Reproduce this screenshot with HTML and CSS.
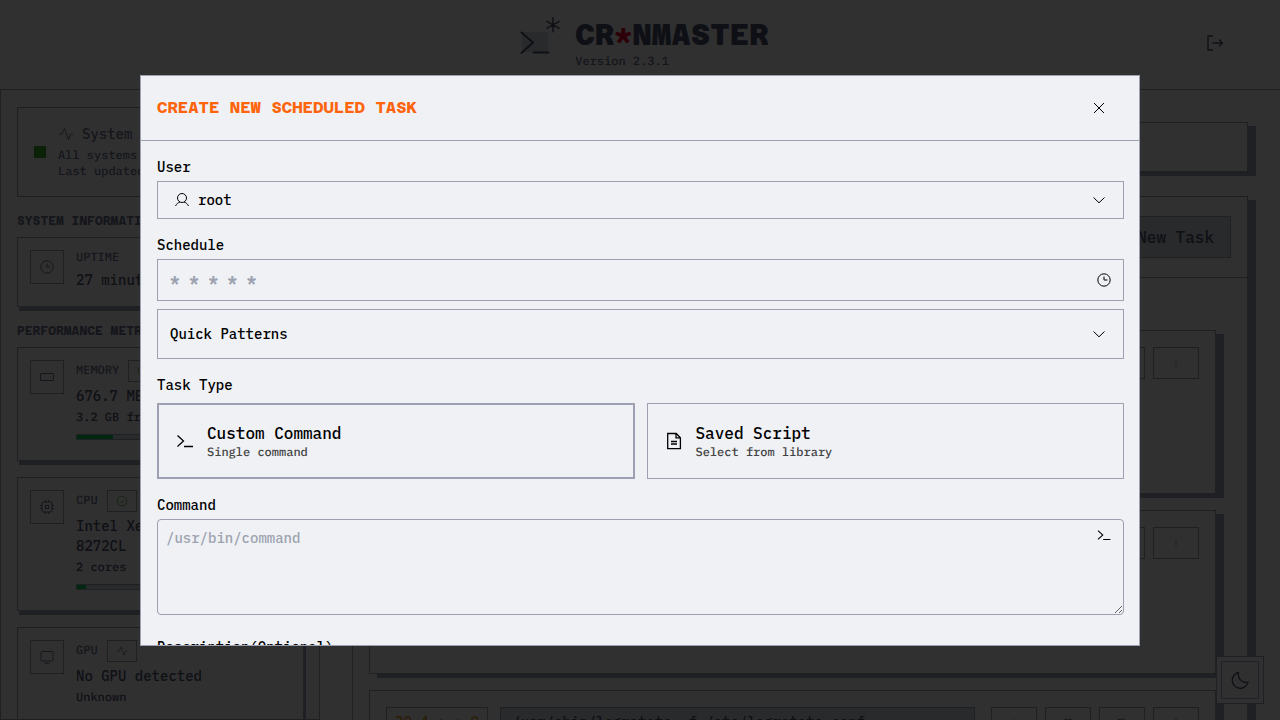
FILE: index.html
```html
<!DOCTYPE html>
<html lang="en">
<head>
<meta charset="utf-8">
<meta name="viewport" content="width=device-width, initial-scale=1">
<title>Cr*nMaster</title>
<link rel="stylesheet" href="styles.css">
</head>
<body>
<svg class="sprite" aria-hidden="true">
  <symbol id="i-activity" viewBox="0 0 16 16"><path d="M1 8h3l2.500-5.500 4 11L13 8h2"/></symbol>
  <symbol id="i-clock" viewBox="0 0 16 16"><circle cx="8" cy="8" r="6.200"/><path d="M8 4.500V8h3.500"/></symbol>
  <symbol id="i-drive" viewBox="0 0 16 16"><rect x="1.500" y="4.500" width="13" height="7" rx=".5"/><path d="M11.500 7.500v1"/></symbol>
  <symbol id="i-cpu" viewBox="0 0 16 16"><rect x="3" y="3" width="10" height="10" rx="1"/><rect x="6.500" y="6.500" width="3" height="3"/><path d="M6.500 1v2M9.500 1v2M6.500 13v2M9.500 13v2M1 6.500h2M1 9.500h2M13 6.500h2M13 9.500h2"/></symbol>
  <symbol id="i-monitor" viewBox="0 0 16 16"><rect x="2" y="2.500" width="12" height="9.500" rx="1"/><path d="M5.500 14.200h5"/></symbol>
  <symbol id="i-check" viewBox="0 0 16 16"><circle cx="8" cy="8" r="6.500"/><path d="M5 8.200l2.200 2.200L11 6.200"/></symbol>
  <symbol id="i-down" viewBox="0 0 16 16"><path d="M2.500 5.500L8 10.800l5.500-5.300"/></symbol>
  <symbol id="i-close" viewBox="0 0 16 16"><path d="M3 3l10 10M13 3L3 13"/></symbol>
  <symbol id="i-user" viewBox="0 0 16 16"><circle cx="8" cy="6" r="4.500"/><path d="M1.500 14c1-2 2.500-3.500 4.500-4M14.500 14c-1-2-2.500-3.500-4.500-4"/></symbol>
  <symbol id="i-terminal" viewBox="0 0 20 20"><path d="M2.500 4.500l6 5.500-6 5.500M9 15.500h9"/></symbol>
  <symbol id="i-file" viewBox="0 0 20 20"><path d="M3.700 2.500h8.500l4.200 4.200v11H3.700zM12 2.700v4.200h4.200M7 10.500h6M7 13h6"/></symbol>
  <symbol id="i-logout" viewBox="0 0 20 20"><path d="M8 3H3v14h5M7.500 10h10M14 6.500l3.500 3.500-3.500 3.500"/></symbol>
  <symbol id="i-moon" viewBox="0 0 20 20"><path d="M8.500 2.500a8 8 0 1 0 9.500 9.800c-6 1-10.500-3.500-9.500-9.800z"/></symbol>
  <symbol id="i-dots" viewBox="0 0 16 16"><path d="M8 3v2M8 7v2M8 11v2" stroke-width="2"/></symbol>
  <symbol id="i-play" viewBox="0 0 16 16"><path d="M8 3v10M3 8h10"/></symbol>
  <symbol id="i-pause" viewBox="0 0 16 16"><path d="M4 3h3v10H4zM9 3h3v10H9z"/></symbol>
  <symbol id="i-save" viewBox="0 0 16 16"><path d="M3 3h8l2 2v8H3zM5 3v3h5"/></symbol>
</svg>

<div class="app">
  <header class="topbar">
    <div class="brand">
      <svg class="logo" viewBox="0 0 52 52" aria-hidden="true">
        <rect class="logo-screen" x="11" y="15" width="26" height="20"/>
        <path d="M10.500 15.500L22 25.500 10.500 36M22.500 35.500h15"/>
        <path class="logo-star" d="M42 .800v14M35.900 4.300l12.200 7M48.100 4.300l-12.200 7"/>
      </svg>
      <div>
        <h1 class="brand-name">CR<span class="brand-star">*</span>NMASTER</h1>
        <p class="version">Version 2.3.1</p>
      </div>
    </div>
    <button class="logout" aria-label="Log out"><svg class="icon icon-20"><use href="#i-logout"/></svg></button>
  </header>

  <div class="columns">
    <aside class="sidebar">
      <section class="status">
        <span class="status-dot"></span>
        <div>
          <h2 class="status-title"><svg class="icon icon-16"><use href="#i-activity"/></svg>System Status</h2>
          <p class="small">All systems running</p>
          <p class="small">Last updated: 10:24</p>
        </div>
      </section>

      <h2 class="group-title">SYSTEM INFORMATION</h2>
      <section class="metric">
        <div class="metric-icon"><svg class="icon icon-16"><use href="#i-clock"/></svg></div>
        <div class="metric-body metric-plain">
          <div class="metric-head">UPTIME</div>
          <p class="value">27 minutes</p>
        </div>
      </section>

      <h2 class="group-title">PERFORMANCE METRICS</h2>
      <div class="metrics">
        <section class="metric">
          <div class="metric-icon"><svg class="icon icon-16"><use href="#i-drive"/></svg></div>
          <div class="metric-body">
            <div class="metric-head">MEMORY<span class="badge good"><svg class="icon icon-12"><use href="#i-check"/></svg></span></div>
            <p class="value">676.7 MB</p>
            <p class="note">3.2 GB free</p>
            <div class="bar"><div class="bar-fill" style="width:17%"></div></div>
          </div>
        </section>
        <section class="metric">
          <div class="metric-icon"><svg class="icon icon-16"><use href="#i-cpu"/></svg></div>
          <div class="metric-body">
            <div class="metric-head">CPU<span class="badge good"><svg class="icon icon-12"><use href="#i-check"/></svg></span></div>
            <p class="value">Intel Xeon Platinum 8272CL</p>
            <p class="note">2 cores</p>
            <div class="bar"><div class="bar-fill" style="width:4%"></div></div>
          </div>
        </section>
        <section class="metric">
          <div class="metric-icon"><svg class="icon icon-16"><use href="#i-monitor"/></svg></div>
          <div class="metric-body">
            <div class="metric-head">GPU<span class="badge"><svg class="icon icon-12"><use href="#i-activity"/></svg></span></div>
            <p class="value">No GPU detected</p>
            <p class="note">Unknown</p>
          </div>
        </section>
      </div>
    </aside>

    <main class="main">
      <section class="panel notice"></section>
      <section class="panel tasks">
        <div class="tasks-head"><button class="new-task">New Task</button></div>
        <div class="jobs">
          <article class="job">
            <div class="job-actions">
              <button class="job-button" aria-label="Pause"></button>
              <button class="job-button faint" aria-label="More"><svg class="icon icon-12"><use href="#i-dots"/></svg></button>
            </div>
          </article>
          <article class="job">
            <div class="job-actions">
              <button class="job-button" aria-label="Pause"></button>
              <button class="job-button faint" aria-label="More"><svg class="icon icon-12"><use href="#i-dots"/></svg></button>
            </div>
          </article>
          <article class="job">
            <code class="cron">30 4 * * 0</code>
            <code class="command">/usr/sbin/logrotate -f /etc/logrotate.conf</code>
            <div class="job-actions">
              <button class="job-button" aria-label="Run"><svg class="icon icon-12"><use href="#i-play"/></svg></button>
              <button class="job-button" aria-label="Pause"><svg class="icon icon-12"><use href="#i-pause"/></svg></button>
              <button class="job-button" aria-label="Log"><svg class="icon icon-12"><use href="#i-save"/></svg></button>
              <button class="job-button" aria-label="More"><svg class="icon icon-12"><use href="#i-dots"/></svg></button>
            </div>
          </article>
        </div>
      </section>
    </main>
  </div>

  <div class="theme"><button class="theme-button" aria-label="Dark theme"><svg class="icon icon-20"><use href="#i-moon"/></svg></button></div>
</div>

<div class="overlay">
  <div class="modal" role="dialog" aria-modal="true" aria-labelledby="dialog-title">
    <div class="modal-head">
      <h2 class="modal-title" id="dialog-title">CREATE NEW SCHEDULED TASK</h2>
      <button class="close" aria-label="Close"><svg class="icon icon-16"><use href="#i-close"/></svg></button>
    </div>
    <form class="modal-body">
      <div class="field">
        <label for="user">User</label>
        <div class="control">
          <svg class="icon icon-16 lead"><use href="#i-user"/></svg>
          <select id="user" class="input user"><option>root</option></select>
          <svg class="icon icon-16 trail"><use href="#i-down"/></svg>
        </div>
      </div>
      <div class="field">
        <label for="schedule">Schedule</label>
        <div class="control">
          <input id="schedule" class="input schedule" type="text" placeholder="* * * * *">
          <svg class="icon icon-16 trail trail-near"><use href="#i-clock"/></svg>
        </div>
        <button type="button" class="patterns">Quick Patterns<svg class="icon icon-16"><use href="#i-down"/></svg></button>
      </div>
      <div class="field">
        <span class="label" id="type-label">Task Type</span>
        <div class="types" role="group" aria-labelledby="type-label">
          <button type="button" class="type selected" aria-pressed="true">
            <svg class="icon icon-20"><use href="#i-terminal"/></svg>
            <span><span class="type-name">Custom Command</span><span class="type-note">Single command</span></span>
          </button>
          <button type="button" class="type" aria-pressed="false">
            <svg class="icon icon-20"><use href="#i-file"/></svg>
            <span><span class="type-name">Saved Script</span><span class="type-note">Select from library</span></span>
          </button>
        </div>
      </div>
      <div class="field">
        <label for="command">Command</label>
        <div class="control">
          <textarea id="command" class="input command-text" placeholder="/usr/bin/command"></textarea>
          <svg class="icon icon-16 corner"><use href="#i-terminal"/></svg>
        </div>
      </div>
      <div class="field description">
        <label for="description">Description(Optional)</label>
        <input id="description" class="input schedule" type="text">
      </div>
    </form>
  </div>
</div>
</body>
</html>
```
FILE: styles.css
```css
:root {
  --bg: #eff1f5;
  --line: #9ca0b0;
  --surface: #ccd0da;
  --text: #4c4f69;
  --muted: #6c6f85;
  --body: "IBM Plex Mono", "DejaVu Sans Mono", monospace;
  --display: "Azeret Mono", "IBM Plex Mono", "DejaVu Sans Mono", monospace;
}

* { box-sizing: border-box; }

body {
  margin: 0;
  background: var(--bg);
  color: var(--text);
  font: 500 14px/20px var(--body);
}

h1, h2, p { margin: 0; }

button, input, select, textarea {
  font: inherit;
  color: inherit;
  background: none;
  border: 0;
  border-radius: 0;
  padding: 0;
  margin: 0;
}

.sprite { position: absolute; width: 0; height: 0; }
.icon { flex: none; display: block; fill: none; stroke: currentColor; stroke-width: 1; }
.icon-12 { width: 12px; height: 12px; }
.icon-16 { width: 16px; height: 16px; }
.icon-20 { width: 20px; height: 20px; stroke-width: 1.3; }

.version, .small, .note, .metric-head, .type-note {
  font-size: 12px;
  line-height: 16px;
  text-rendering: geometricPrecision;
}

.app {
  height: 100vh;
  overflow: hidden;
  display: flex;
  flex-direction: column;
}

/* Top bar */
.topbar {
  flex: none;
  display: grid;
  grid-template-columns: 1fr auto 1fr;
  align-items: center;
  padding: 16px 55px 19px;
  border-bottom: 1px solid var(--line);
}
.brand { grid-column: 2; display: flex; align-items: center; gap: 12px; }
.logo { width: 52px; height: 52px; fill: none; stroke: var(--text); stroke-width: 2; stroke-linecap: round; }
.logo-screen { fill: var(--surface); stroke: none; }
.logo-star { stroke-width: 1.5; }
.brand-name { font-family: var(--display); font-size: 30px; line-height: 36px; font-weight: 800; }
.brand-star { font-family: var(--body); font-weight: 700; color: #e00030; }
.version { padding-top: 1px; color: var(--muted); }
.logout { justify-self: end; }

/* Sidebar */
.columns { flex: 1; min-height: 0; display: flex; }
.sidebar {
  flex: none;
  width: 320px;
  padding: 17px 15px 17px 16px;
  border: 1px solid var(--line);
  border-top: 0;
  overflow: hidden;
}
.status {
  display: flex;
  align-items: center;
  gap: 12px;
  padding: 16px;
  border: 1px solid var(--line);
  white-space: nowrap;
  color: var(--muted);
}
.status-dot { width: 12px; height: 12px; background: #40a02b; }
.status-title { display: flex; align-items: center; gap: 8px; margin-bottom: 4px; font-size: 14px; font-weight: 500; }
.group-title { margin: 16px 0 8px; font-family: var(--display); font-size: 12px; line-height: 16px; font-weight: 700; color: var(--muted); }
.metrics { display: flex; flex-direction: column; gap: 16px; }
.metric {
  display: flex;
  align-items: flex-start;
  gap: 12px;
  padding: 12px;
  border: 1px solid var(--line);
  background: var(--bg);
  box-shadow: 2px 4px 0 var(--line);
}
.metric-icon { padding: 8px; border: 1px solid var(--line); color: var(--muted); }
.metric-body { flex: 1; min-width: 0; padding-bottom: 8px; }
.metric-plain { padding-bottom: 4px; }
.metric-head { display: flex; align-items: center; gap: 9px; color: var(--muted); }
.badge { padding: 4px 8px; border: 1px solid var(--line); }
.good .icon { color: #40a02b; }
.value { margin-top: 4px; }
.note { margin-top: 4px; }
.bar { height: 6px; margin-top: 8px; border: 1px solid var(--line); background: var(--surface); }
.bar-fill { height: 100%; background: #00c950; }

/* Tasks */
.main { flex: 1; min-width: 0; padding: 32px; display: flex; flex-direction: column; gap: 24px; }
.panel { flex: none; border: 1px solid var(--line); background: var(--bg); box-shadow: 8px 4px 0 var(--line); }
.notice { height: 50px; }
.tasks-head {
  display: flex;
  justify-content: flex-end;
  padding: 19px 16px;
  border-bottom: 1px solid var(--line);
}
.new-task { padding: 8px 16px; border: 1px solid var(--line); background: var(--surface); font-size: 16px; line-height: 24px; }
.jobs { display: flex; flex-direction: column; gap: 16px; padding: 52px 31px 16px 16px; }
.job {
  display: flex;
  align-items: flex-start;
  min-height: 164px;
  padding: 16px;
  border: 1px solid var(--line);
  background: var(--bg);
  box-shadow: 8px 4px 0 var(--line);
}
.cron, .command { padding: 4px 8px; border: 1px solid var(--line); font: inherit; white-space: nowrap; }
.cron { margin-right: 12px; color: #df8e1d; }
.command { flex: 1; min-width: 0; padding: 4px 11px; overflow: hidden; background: var(--surface); }
.job-actions { display: flex; gap: 8px; margin-left: auto; padding-left: 16px; }
.job-button { width: 46px; height: 32px; display: grid; place-items: center; border: 1px solid var(--line); }
.faint { color: var(--line); }

.theme {
  position: fixed;
  right: 16px;
  bottom: 16px;
  padding: 4px;
  border: 1px solid var(--line);
  background: var(--bg);
}
.theme-button { display: block; padding: 8px; border: 1px solid var(--line); }

/* Dialog */
.overlay {
  position: fixed;
  inset: 0;
  display: flex;
  justify-content: center;
  padding: 75px 16px 74px;
  background: rgba(0, 0, 0, 0.8);
  color: #000;
}
.modal {
  flex: 1;
  max-width: 1000px;
  display: flex;
  flex-direction: column;
  overflow: hidden;
  border: 1px solid var(--line);
  background: var(--bg);
}
.modal-head {
  flex: none;
  display: flex;
  align-items: center;
  justify-content: space-between;
  padding: 12px 16px;
  border-bottom: 1px solid var(--line);
}
.modal-title { font-family: var(--display); font-size: 16px; line-height: 24px; font-weight: 700; color: #fe640b; }
.close { padding: 12px 16px; }
.modal-body {
  flex: 1;
  min-height: 0;
  overflow: hidden;
  display: flex;
  flex-direction: column;
  gap: 16px;
  padding: 16px 15px 16px 16px;
}
.field { flex: none; display: flex; flex-direction: column; }
.field > label { margin-bottom: 4px; }
.label { margin-bottom: 8px; }
.control { position: relative; display: flex; }
.input { width: 100%; border: 1px solid var(--line); }
.input::placeholder { color: #9ca3af; opacity: 1; }
.user { appearance: none; height: 38px; padding: 0 40px; }
.schedule { height: 42px; padding: 0 40px 0 12px; font-size: 16px; font-weight: 700; }
.lead, .trail, .corner { position: absolute; pointer-events: none; }
.lead { left: 17px; top: 11px; }
.trail { right: 17px; top: 11px; }
.trail-near { right: 12px; top: 13px; }
.corner { right: 12px; top: 8px; stroke-width: 1.3; }
.patterns {
  display: flex;
  align-items: center;
  justify-content: space-between;
  margin-top: 8px;
  padding: 14px 16px 14px 12px;
  border: 1px solid var(--line);
}
.types { display: grid; grid-template-columns: 1fr 1fr; gap: 12px; }
.type {
  display: flex;
  align-items: center;
  gap: 12px;
  padding: 16px;
  border: 1px solid var(--line);
  text-align: left;
}
.selected { border-width: 2px; }
.type-name { display: block; font-size: 16px; line-height: 24px; }
.type-note { display: block; color: #444; }
.command-text { display: block; height: 96px; padding: 8px; border-radius: 4px; resize: vertical; }
.description { margin-top: 6px; }
```
